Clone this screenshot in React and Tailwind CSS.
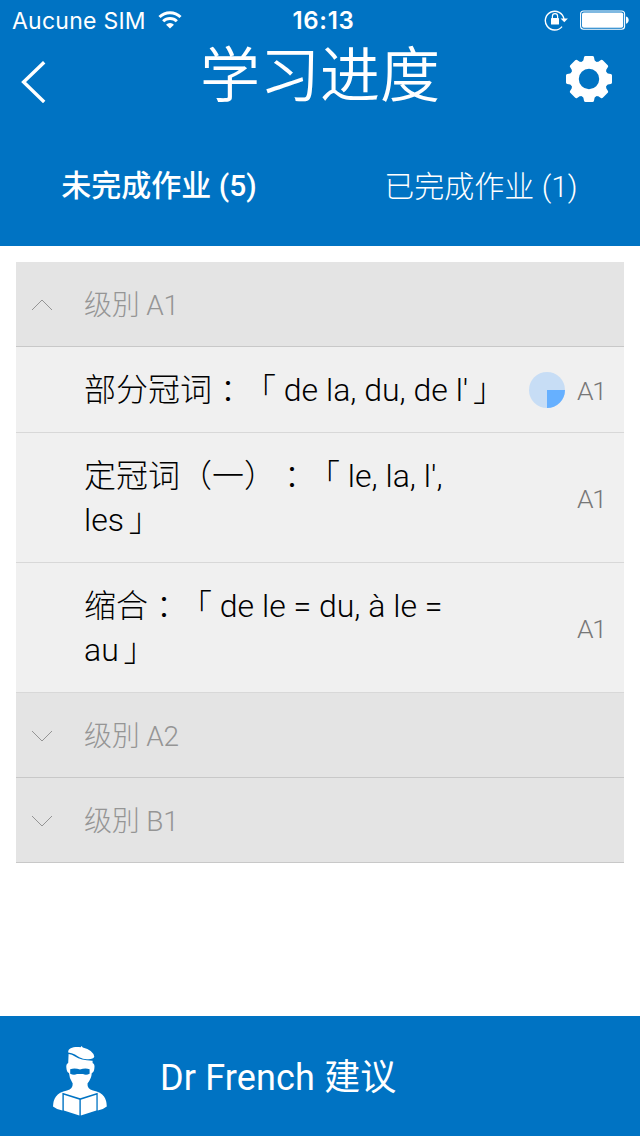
import React from "react";

function Chevron({ up }) {
  return (
    <svg className="mt-[2px] block h-3 w-5 shrink-0" viewBox="0 0 20 12" fill="none" stroke="#949494" strokeWidth="1">
      <path d={up ? "M0 11 L10 1 L20 11" : "M0 1 L10 11 L20 1"} />
    </svg>
  );
}

function LevelRow({ label, up, border }) {
  return (
    <div className={`flex h-[85px] items-center border-b bg-[#e4e4e4] pl-4 ${border}`}>
      <Chevron up={up} />
      <span className="mt-[3px] ml-8 text-[28px] leading-[40px] font-light tracking-[-0.2px] text-[#959595]">{label}</span>
    </div>
  );
}

function Colon() {
  return <span lang="zh-TW" className="relative top-[2px] font-['Noto_Sans_CJK_TC',sans-serif] leading-none">：</span>;
}

function Close() {
  return <span className="-ml-[3px]">」</span>;
}

function Lesson({ children, height, progress }) {
  return (
    <div className={`flex items-center justify-between border-b border-[#d8d8d8] bg-[#f0f0f0] pr-[19px] pl-[68px] ${height}`}>
      <div className="text-[32px] leading-[44px] font-light whitespace-nowrap text-black [text-spacing-trim:space-all]">{children}</div>
      <div className="flex items-center">
        {progress && (
          <svg className="mr-3 block size-9" viewBox="0 0 36 36">
            <circle cx="18" cy="18" r="18" fill="#c7ddf5" />
            <path d="M18 18 H36 A18 18 0 0 1 18 36 Z" fill="#66b0ff" />
          </svg>
        )}
        <span className="mt-[3px] w-7 text-[26.5px] leading-[40px] font-light tracking-[-1.4px] text-[#777]">A1</span>
      </div>
    </div>
  );
}

function Wifi() {
  return (
    <svg className="ml-3 block h-[18px] w-6" viewBox="0 0 26 19" fill="none" stroke="#fff" strokeWidth="3.2">
      <path d="M1.6 6.3 A16.2 16.2 0 0 1 24.4 6.3" />
      <path d="M5.6 10.9 A10.5 10.5 0 0 1 20.4 10.9" />
      <path d="M8.7 14.6 A6 6 0 0 1 17.3 14.6 L13 18.8 Z" fill="#fff" stroke="none" />
    </svg>
  );
}

function RotationLock() {
  return (
    <svg className="block h-[22px] w-6" viewBox="0 0 24 22" fill="none" stroke="#fff">
      <path d="M18 17.6 A9.4 9.4 0 1 1 20 10" strokeWidth="1.4" />
      <path d="M16.6 9.6 H23.9 L20.3 13.2 Z" fill="#fff" stroke="none" />
      <rect x="7" y="9" width="8" height="6.5" rx="0.6" fill="#fff" stroke="none" />
      <path d="M8.4 9 V7.2 A2.6 2.6 0 0 1 13.6 7.2 V9" strokeWidth="1.2" />
    </svg>
  );
}

function Battery() {
  return (
    <svg className="ml-3 block h-5 w-[50px]" viewBox="0 0 50 20">
      <rect x="0.6" y="1" width="44" height="18.2" rx="3" fill="none" stroke="#fff" strokeWidth="1.1" />
      <rect x="2" y="2.4" width="41.2" height="15.4" rx="1.8" fill="#fff" />
      <path d="M46 6.6 C49.6 7.4 49.6 13 46 13.8 Z" fill="#fff" />
    </svg>
  );
}

const TEETH = [0, 45, 90, 135, 180, 225, 270, 315];

function Gear() {
  return (
    <svg className="block size-[46px]" viewBox="0 0 46 46" fill="#fff">
      {TEETH.map((a) => (
        <path key={a} transform={`rotate(${a} 23 23)`} d="M15.5 6.5 L17.4 4.2 L18 1.2 Q18.3 0 19.5 0 H26.5 Q27.7 0 28 1.2 L28.6 4.2 L30.5 6.5 Z" />
      ))}
      <circle cx="23" cy="23" r="14.4" fill="none" stroke="#fff" strokeWidth="8.4" />
    </svg>
  );
}

function Teacher() {
  return (
    <svg className="mt-[9px] block h-[70px] w-14" viewBox="0 0 56 70" fill="#fff">
      <path d="M16.2 6.4 C16 1.5 22 0.6 28.6 1.2 L29.6 0 L30.8 1.4 Q41 4 42.3 10.5 Q41.5 13.6 35 13.2 C29 12.8 26 10.2 23 8.4 Q20 7 16.2 6.4 Z" />
      <path d="M16.6 8 Q20 8.4 23 10.6 Q29 14.8 40.6 14.7 V17 Q43 18 42.4 22 Q42 26.4 39.8 27 Q39.5 32.5 35.5 37.5 Q35 43 41 44.5 Q49 46 52 50.5 Q54.6 54 54.8 60.5 Q50.5 64 45.7 64.6 V46.8 L28.2 52.3 L10.4 46.8 V64.6 Q5.4 64 1 60.5 Q1.2 54 4 50.5 Q7 46 15 44.5 Q21 43 20.7 37.5 Q17.2 32.5 17 27 Q14.8 26.4 14.4 22 Q13.8 18 16.2 17 Z" />
      <path d="M18.2 23.2 Q23 21.8 28 23.6 Q33 21.8 37.6 23.2 V27.8 Q34 29.4 31 28 H25 Q22 29.4 18.2 27.8 Z" fill="#0073c3" />
      <path d="M11.8 48.8 L27.4 53.8 V69.4 L11.8 64.4 Z" />
      <path d="M44.4 48.8 L28.8 53.8 V69.4 L44.4 64.4 Z" />
    </svg>
  );
}

export default function App() {
  return (
    <div className="flex h-[1136px] w-[640px] flex-col overflow-hidden bg-white font-['Roboto','Noto_Sans_CJK_SC',sans-serif]" lang="zh-CN">
      <header className="h-[246px] bg-[#0073c3] text-white">
        <div className="grid h-10 grid-cols-3 items-center font-['Inter',sans-serif]">
          <div className="flex items-center pl-3">
            <span className="mt-[2px] text-[23px] leading-7 tracking-[0.25px]">Aucune SIM</span>
            <Wifi />
          </div>
          <span className="mt-[2px] pl-[7px] text-center text-[24px] leading-7 font-semibold tracking-[0.7px]">16:13</span>
          <div className="flex items-center justify-end pr-[10px]">
            <RotationLock />
            <Battery />
          </div>
        </div>
        <div className="grid h-[88px] grid-cols-[160px_1fr_160px]">
          <div className="pt-[21px] pl-5">
            <svg className="block h-[42px] w-[26px]" viewBox="0 0 26 42" fill="none" stroke="#fff" strokeWidth="3.4">
              <path d="M24.2 1.2 L3.6 21 L24.2 41" />
            </svg>
          </div>
          <h1 className="pt-[2px] text-center text-[60px] leading-[70px] font-[350] whitespace-nowrap">学习进度</h1>
          <div className="flex justify-end pt-4 pr-7">
            <Gear />
          </div>
        </div>
        <nav className="grid grid-cols-2 text-center text-[30px] leading-[40px]">
          <span className="pt-[38px] pr-[2px] font-medium">未完成作业 (5)</span>
          <span className="pt-[39px] pl-[2px] font-light">已完成作业 (1)</span>
        </nav>
      </header>

      <main className="flex-1 px-4 pt-4">
        <LevelRow label="级別 A1" up border="border-[#c8c8c8]" />
        <Lesson height="h-[86px]" progress>
          部分冠词<Colon />「 de la, du, de l' <Close />
        </Lesson>
        <Lesson height="h-[130px]">
          定冠词（一）<Colon />「 le, la, l',<br />les <Close />
        </Lesson>
        <Lesson height="h-[130px]">
          缩合<Colon />「 de le = du, à le =<br />au <Close />
        </Lesson>
        <LevelRow label="级別 A2" border="border-[#c8c8c8]" />
        <LevelRow label="级別 B1" border="border-[#c8c8c8]" />
      </main>

      <footer className="flex h-[120px] items-center bg-[#0073c3] pl-[52px] text-white">
        <Teacher />
        <span className="mt-[4px] ml-[52px] text-[36px] leading-[48px] tracking-[0.15px]">Dr French 建议</span>
      </footer>
    </div>
  );
}
